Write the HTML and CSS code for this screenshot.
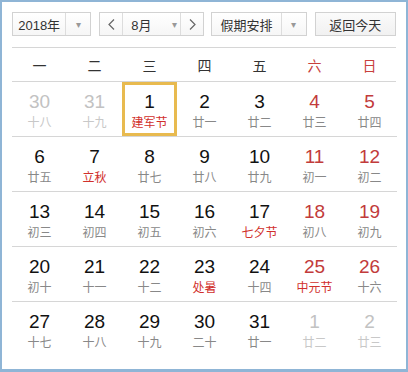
FILE: index.html
```html
<!DOCTYPE html>
<html lang="zh-CN">
<head>
  <meta charset="UTF-8" />
  <title>日历</title>
  <link rel="stylesheet" href="styles.css">
</head>
<body>

<div class="calendario">
  <div class="barra">
    <div class="caixa ano">
      <span class="rotulo">2018年</span>
      <span class="seta">&#9662;</span>
    </div>
    <div class="caixa mes">
      <span class="nav">
        <svg width="7" height="11" viewBox="0 0 7 11"><polyline points="6,0.5 1,5.5 6,10.5" fill="none" stroke="#666" stroke-width="1.2"/></svg>
      </span>
      <span class="rotulo-mes">8月<span class="seta-mes">&#9662;</span></span>
      <span class="nav">
        <svg width="7" height="11" viewBox="0 0 7 11"><polyline points="1,0.5 6,5.5 1,10.5" fill="none" stroke="#666" stroke-width="1.2"/></svg>
      </span>
    </div>
    <div class="caixa feriado">
      <span class="rotulo">假期安排</span>
      <span class="seta">&#9662;</span>
    </div>
    <div class="caixa hoje">返回今天</div>
  </div>

  <div class="semana">
    <div>一</div><div>二</div><div>三</div><div>四</div><div>五</div>
    <div class="fim">六</div><div class="fim">日</div>
  </div>

  <div class="grade" id="grade"></div>
</div>

<script>
  const dias = [
    ["30", "十八", "fora"], ["31", "十九", "fora"], ["1", "建军节", "sel fest"], ["2", "廿一"], ["3", "廿二"], ["4", "廿三", "fds"], ["5", "廿四", "fds"],
    ["6", "廿五"], ["7", "立秋", "fest"], ["8", "廿七"], ["9", "廿八"], ["10", "廿九"], ["11", "初一", "fds"], ["12", "初二", "fds"],
    ["13", "初三"], ["14", "初四"], ["15", "初五"], ["16", "初六"], ["17", "七夕节", "fest"], ["18", "初八", "fds"], ["19", "初九", "fds"],
    ["20", "初十"], ["21", "十一"], ["22", "十二"], ["23", "处暑", "fest"], ["24", "十四"], ["25", "中元节", "fds fest"], ["26", "十六", "fds"],
    ["27", "十七"], ["28", "十八"], ["29", "十九"], ["30", "二十"], ["31", "廿一"], ["1", "廿二", "fora"], ["2", "廿三", "fora"]
  ];

  const grade = document.getElementById('grade');
  dias.forEach((d, i) => {
    const div = document.createElement('div');
    div.className = 'dia ' + (d[2] || '') + (i >= 28 ? ' ultima' : '');
    div.innerHTML = `<span class="num">${d[0]}</span><span class="lunar">${d[1]}</span>`;
    grade.appendChild(div);
  });
</script>

</body>
</html>
```

FILE: styles.css
```css
body {
  margin: 0;
  font-family: "Liberation Sans", "Noto Sans CJK SC", sans-serif;
  background: #fff;
}
.calendario {
  width: 408px;
  height: 372px;
  box-sizing: border-box;
  border: 2px solid #8fb5d6;
  border-bottom-width: 3px;
  padding: 10px 9px 0 9px;
}
.barra {
  display: flex;
  gap: 7px;
  height: 24px;
  padding-bottom: 11px;
  margin: 0 1px;
  border-bottom: 1px solid #d6d6d6;
}
.caixa {
  display: flex;
  align-items: center;
  height: 24px;
  box-sizing: border-box;
  border: 1px solid #d2d2d2;
  background: linear-gradient(#fff, #f6f6f6);
  font-size: 13px;
  color: #333;
  white-space: nowrap;
}
.caixa .rotulo {
  flex-grow: 1;
  text-align: center;
}
.caixa .seta {
  width: 24px;
  height: 100%;
  border-left: 1px solid #ddd;
  display: flex;
  align-items: center;
  justify-content: center;
  color: #999;
  font-size: 10px;
}
.ano {
  width: 80px;
}
.mes {
  width: 106px;
  margin-left: 1px;
}
.mes .nav {
  width: 22px;
  height: 100%;
  display: flex;
  align-items: center;
  justify-content: center;
  flex-shrink: 0;
}
.mes .rotulo-mes {
  flex-grow: 1;
  height: 100%;
  border-left: 1px solid #ddd;
  border-right: 1px solid #ddd;
  display: flex;
  align-items: center;
  padding-left: 8px;
  gap: 20px;
}
.seta-mes {
  color: #999;
  font-size: 10px;
}
.feriado {
  width: 96px;
}
.hoje {
  width: 82px;
  margin-left: 1px;
  justify-content: center;
  background: linear-gradient(#fbfbfb, #f1f1f1);
}
.semana {
  display: grid;
  grid-template-columns: repeat(7, 55px);
  height: 33px;
  align-items: center;
  font-family: "Noto Sans CJK SC", sans-serif;
  font-size: 14px;
  color: #333;
  text-align: center;
  border-bottom: 1px solid #d6d6d6;
  margin: 0 1px;
}
.semana .fim {
  color: #c8403c;
}
.grade {
  display: grid;
  grid-template-columns: repeat(7, 55px);
  margin: 0 1px;
}
.dia {
  height: 55px;
  box-sizing: border-box;
  border-bottom: 1px solid #d6d6d6;
  display: flex;
  flex-direction: column;
  align-items: center;
  padding-top: 9px;
}
.dia.ultima {
  border-bottom: none;
}
.dia .num {
  font-size: 19px;
  line-height: 22px;
  color: #111;
}
.dia .lunar {
  font-family: "Noto Sans CJK SC", sans-serif;
  font-size: 12px;
  line-height: 17px;
  color: #888;
}
.dia.fds .num {
  color: #c23b3b;
}
.dia.fest .lunar {
  color: #d1302c;
}
.dia.fora .num {
  color: #c2c2c2;
}
.dia.fora .lunar {
  color: #c8c8c8;
}
.dia.sel {
  box-shadow: inset 0 0 0 3px #e8ba4f;
}
```
